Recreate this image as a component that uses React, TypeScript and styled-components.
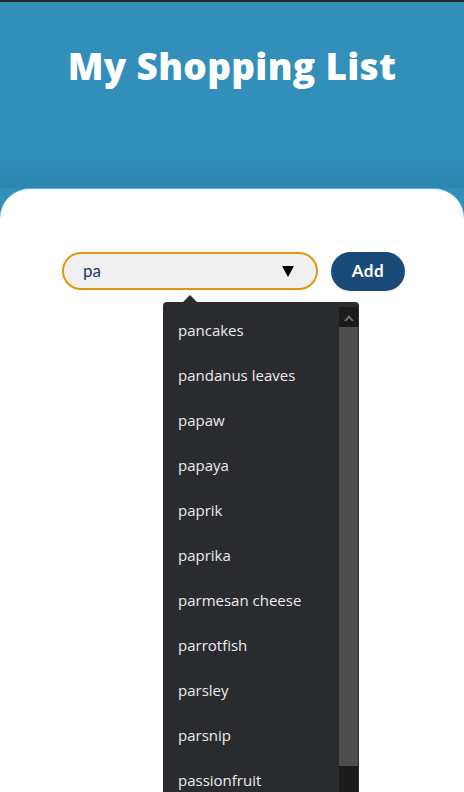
import React from "react";
import styled, { createGlobalStyle } from "styled-components";

const Global = createGlobalStyle`
  html, body { margin: 0; padding: 0; background: #ffffff; overflow: hidden; }
  body { font-family: "Open Sans", "Liberation Sans", sans-serif; }
  * { box-sizing: border-box; }
`;

const Page = styled.div`
  height: 792px;
  overflow: hidden;
  background: #318fba;
  border-top: 2px solid #24272b;
  display: flex;
  flex-direction: column;
`;

const Header = styled.header`
  height: 186px;
  flex-shrink: 0;
  display: flex;
  justify-content: center;
  padding-top: 41px;
  background: linear-gradient(to bottom, #318fba 0%, #318fba 80%, #2d86b0 100%);
`;

const Title = styled.h1`
  margin: 0;
  font-family: "Open Sans", "Liberation Sans", sans-serif;
  font-weight: 800;
  font-size: 37px;
  line-height: 46px;
  color: #ffffff;
  letter-spacing: 0.3px;
`;

const Card = styled.main`
  flex: 1;
  background: #ffffff;
  border-radius: 30px 30px 0 0;
  border-top: 1px solid #53b6ea;
  padding-top: 63px;
  display: flex;
  justify-content: center;
`;

const Form = styled.div`
  position: relative;
  display: flex;
  gap: 13px;
  height: 39px;
  margin-left: 3px;
`;

const InputBox = styled.div`
  width: 256px;
  height: 38px;
  border: 2px solid #e3960c;
  border-radius: 19px;
  background: #f0f0f0;
  display: flex;
  align-items: center;
  padding: 0 22px 0 19px;
`;

const InputText = styled.span`
  flex: 1;
  font-family: "Lato", "Liberation Sans", sans-serif;
  font-size: 17px;
  color: #1b3a66;
  padding-bottom: 2px;
`;

const Arrow = styled.span`
  width: 0;
  height: 0;
  border-left: 6px solid transparent;
  border-right: 6px solid transparent;
  border-top: 11px solid #000000;
`;

const AddButton = styled.button`
  width: 74px;
  height: 39px;
  border: none;
  border-radius: 20px;
  background: #1a4a77;
  color: #ffffff;
  font-family: "Lato", "Liberation Sans", sans-serif;
  font-weight: 700;
  font-size: 17px;
  letter-spacing: 0.6px;
  padding: 0 0 2px;
`;

const Popup = styled.div`
  position: absolute;
  left: 101px;
  top: 50px;
  width: 196px;
  height: 490px;
  background: #2a2b2f;
  border-radius: 4px 4px 0 0;
  display: flex;
  padding: 5px 1px 0 0;
  &::before {
    content: "";
    position: absolute;
    left: 20px;
    top: -7px;
    border-left: 7px solid transparent;
    border-right: 7px solid transparent;
    border-bottom: 7px solid #2a2b2f;
  }
`;

const List = styled.ul`
  list-style: none;
  margin: 0;
  padding: 1px 0 0 15px;
  flex: 1;
  overflow: hidden;
`;

const Item = styled.li`
  height: 45px;
  display: flex;
  align-items: center;
  font-family: "Open Sans", "Liberation Sans", sans-serif;
  font-size: 15px;
  color: #ececec;
  padding-bottom: 2px;
  white-space: nowrap;
`;

const Scrollbar = styled.div`
  width: 19px;
  background: #1b1b1c;
  display: flex;
  flex-direction: column;
`;

const ScrollArrow = styled.div`
  height: 20px;
  display: flex;
  justify-content: center;
  align-items: center;
`;

const Thumb = styled.div`
  height: 439px;
  background: #4e4e4e;
`;

const items = [
  "pancakes",
  "pandanus leaves",
  "papaw",
  "papaya",
  "paprik",
  "paprika",
  "parmesan cheese",
  "parrotfish",
  "parsley",
  "parsnip",
  "passionfruit",
];

export default function App() {
  return (
    <>
      <Global />
      <Page>
        <Header>
          <Title>My Shopping List</Title>
        </Header>
        <Card>
          <Form>
            <InputBox>
              <InputText>pa</InputText>
              <Arrow />
            </InputBox>
            <AddButton>Add</AddButton>
            <Popup>
              <List>
                {items.map((i) => (
                  <Item key={i}>{i}</Item>
                ))}
              </List>
              <Scrollbar>
                <ScrollArrow>
                  <svg width="10" height="7" viewBox="0 0 10 7">
                    <path d="M0 7 L5 1 L10 7 L7.5 7 L5 4 L2.5 7 Z" fill="#707070" />
                  </svg>
                </ScrollArrow>
                <Thumb />
              </Scrollbar>
            </Popup>
          </Form>
        </Card>
      </Page>
    </>
  );
}
